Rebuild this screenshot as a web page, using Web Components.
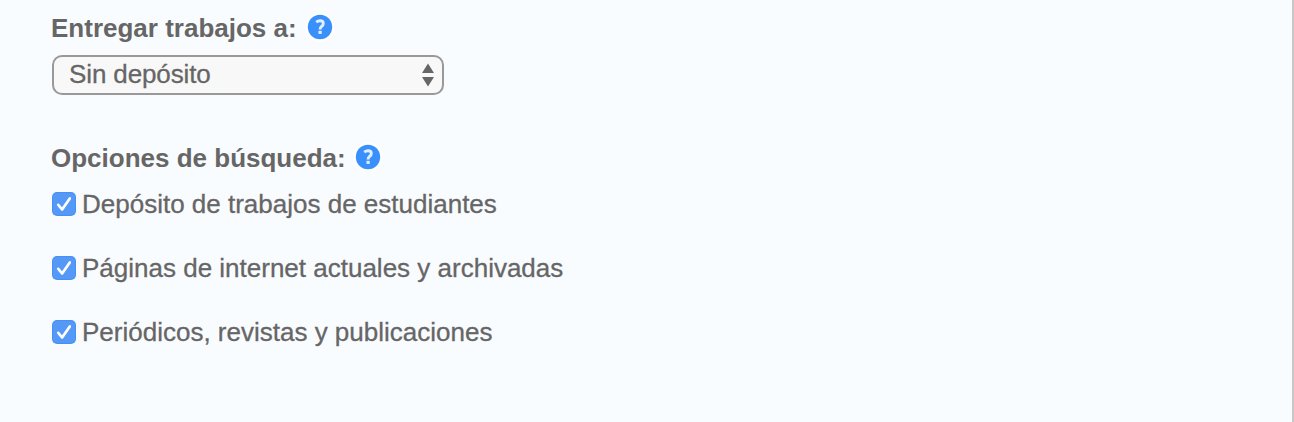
<!DOCTYPE html>
<html lang="es">
<head>
<meta charset="utf-8">
<title>Opciones</title>
<style>
  body {
    margin: 0;
    background: #f9fcff;
  }
</style>
</head>
<body>
<settings-panel>
  <field-group label="Entregar trabajos a:" style="--gap: 13px; --icon-gap: 8px">
    <select-box>Sin depósito</select-box>
  </field-group>
  <field-group label="Opciones de búsqueda:" style="--gap: 17px; --icon-gap: 7.5px">
    <check-option>Depósito de trabajos de estudiantes</check-option>
    <check-option>Páginas de internet actuales y archivadas</check-option>
    <check-option>Periódicos, revistas y publicaciones</check-option>
  </field-group>
</settings-panel>

<script>
class SettingsPanel extends HTMLElement {
  constructor() {
    super();
    this.attachShadow({ mode: 'open' }).innerHTML = `
      <style>
        :host {
          box-sizing: border-box;
          display: flex;
          flex-direction: column;
          gap: 47px;
          height: 422px;
          padding: 12px 0 0 52px;
          border-right: 2px solid #c8c8c8;
          background: #f9fcff;
          color: #666;
          font: 26px/30px "Liberation Sans", Arial, sans-serif;
          -webkit-text-stroke: 0.3px #666;
        }
      </style>
      <slot></slot>
    `;
  }
}

class HelpIcon extends HTMLElement {
  constructor() {
    super();
    this.attachShadow({ mode: 'open' }).innerHTML = `
      <style>
        :host {
          display: block;
          width: 30px;
          height: 30px;
        }
        svg {
          display: block;
        }
      </style>
      <svg width="30" height="30" viewBox="0 0 30 30">
        <circle cx="15" cy="15" r="14.5" fill="#fff"/>
        <circle cx="15" cy="15" r="12.2" fill="#3a90fb"/>
        <path d="M11.2 10.1Q13 8.8 15 8.8Q18.3 8.8 18.3 11.5Q18.3 13.2 16.7 14.3Q15.1 15.4 15.1 17.6"
          fill="none" stroke="#e0efff" stroke-width="2.9"/>
        <rect x="13.5" y="18.8" width="3.2" height="3.1" fill="#e0efff"/>
      </svg>
    `;
  }
}

class FieldGroup extends HTMLElement {
  connectedCallback() {
    this.attachShadow({ mode: 'open' }).innerHTML = `
      <style>
        :host {
          display: block;
        }
        .heading {
          display: flex;
          align-items: center;
          gap: var(--icon-gap);
          height: 30px;
          margin-bottom: var(--gap);
          font-weight: bold;
          -webkit-text-stroke: 0;
        }
        .label {
          padding-top: 2px;
          margin-left: -1px;
        }
        .content {
          display: flex;
          flex-direction: column;
          gap: 34px;
        }
      </style>
      <div class="heading">
        <span class="label">${this.getAttribute('label')}</span>
        <help-icon></help-icon>
      </div>
      <div class="content"><slot></slot></div>
    `;
  }
}

class SelectBox extends HTMLElement {
  constructor() {
    super();
    this.attachShadow({ mode: 'open' }).innerHTML = `
      <style>
        :host {
          box-sizing: border-box;
          display: flex;
          align-items: center;
          justify-content: space-between;
          width: 392px;
          height: 40px;
          padding: 0 8px 0 15px;
          border: 2px solid #999;
          border-radius: 10px;
          background: #f8f8f8;
        }
        span {
          padding-bottom: 2px;
          letter-spacing: -0.12px;
        }
      </style>
      <span><slot></slot></span>
      <svg width="12" height="24" viewBox="0 0 12 24">
        <path d="M6 0.5L12 10H0ZM0 14H12L6 23.5Z" fill="#666"/>
      </svg>
    `;
  }
}

class CheckOption extends HTMLElement {
  constructor() {
    super();
    this.attachShadow({ mode: 'open' }).innerHTML = `
      <style>
        :host {
          display: flex;
          align-items: center;
          gap: 6px;
          height: 30px;
        }
      </style>
      <svg width="24" height="24" viewBox="0 0 24 24">
        <rect width="24" height="24" rx="5" fill="#4a90f2"/>
        <rect x="1" y="1" width="22" height="22" rx="4" fill="#5499f7"/>
        <path d="M6.3 12.9L10.1 17.5L17.8 6.4" fill="none" stroke="#fff" stroke-width="2.7" stroke-linecap="round" stroke-linejoin="round"/>
      </svg>
      <span><slot></slot></span>
    `;
  }
}

customElements.define('settings-panel', SettingsPanel);
customElements.define('help-icon', HelpIcon);
customElements.define('field-group', FieldGroup);
customElements.define('select-box', SelectBox);
customElements.define('check-option', CheckOption);
</script>
</body>
</html>
